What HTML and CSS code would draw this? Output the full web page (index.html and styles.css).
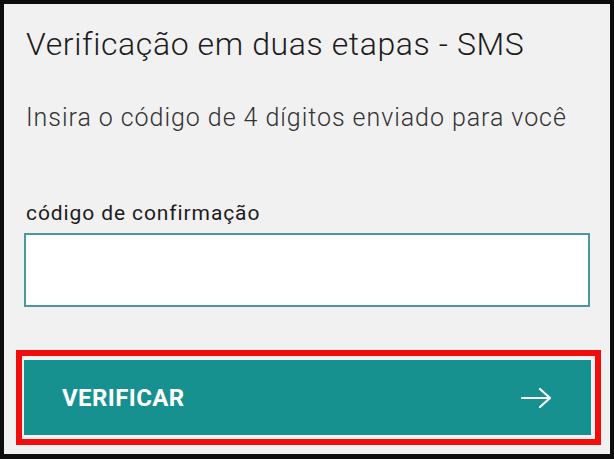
FILE: index.html
```html
<!DOCTYPE html>
<html>
<head>
  <meta charset="UTF-8">
  <link rel="stylesheet" href="styles.css">
</head>
<body>
  <div class="screen">
    <h1 class="title">Verificação em duas etapas - SMS</h1>
    <p class="hint">Insira o código de 4 dígitos enviado para você</p>

    <label class="field-label" for="code">código de confirmação</label>
    <input class="code-input" id="code" type="text">

    <div class="highlight">
      <button class="verify-btn">
        <span>VERIFICAR</span>
        <svg class="arrow" width="32" height="22" viewBox="0 0 32 22">
          <path d="M1 11 H29 M19 2 L29 11 L19 20" fill="none" stroke="white" stroke-width="2.2" stroke-linecap="round" stroke-linejoin="round"/>
        </svg>
      </button>
    </div>
  </div>
</body>
</html>
```

FILE: styles.css
```css
html, body{
  margin: 0;
  height: 100%;
}
body{
  background-color: #0d0d0d;
  padding: 4px 4px 5px 4px;
  box-sizing: border-box;
  font-family: Roboto, "Noto Sans", sans-serif;
}
.screen{
  background-color: #f1f1f1;
  height: 100%;
  padding: 0 20px 0 20px;
  box-sizing: border-box;
  display: flex;
  flex-direction: column;
}
.title{
  margin: 22px 0 0 2px;
  font-size: 32px;
  font-weight: 300;
  letter-spacing: 0.6px;
  color: #1c1c1c;
  line-height: 36px;
}
.hint{
  margin: 41px 0 0 2px;
  font-size: 25px;
  font-weight: 300;
  letter-spacing: 0.95px;
  color: #333333;
  line-height: 30px;
}
.field-label{
  margin: 68px 0 0 2px;
  font-size: 21px;
  font-weight: 400;
  letter-spacing: 0.9px;
  color: #1c1c1c;
  line-height: 24px;
}
.code-input{
  margin: 8px 0 0 0;
  height: 74px;
  width: 566px;
  box-sizing: border-box;
  border: 2px solid #4a9a9d;
  background-color: white;
  outline: none;
}
.highlight{
  margin: 43px 0 0 -8px;
  width: 585px;
  border: 6px solid #f20d0d;
  padding: 4px 4px 4px 2px;
  box-sizing: border-box;
}
.verify-btn{
  width: 100%;
  height: 75px;
  border: none;
  background-color: #16918f;
  color: white;
  font-family: Roboto, "Noto Sans", sans-serif;
  font-size: 24px;
  font-weight: 700;
  letter-spacing: 0.4px;
  display: flex;
  align-items: center;
  justify-content: space-between;
  padding: 0 38px 0 38px;
  cursor: pointer;
}
```
